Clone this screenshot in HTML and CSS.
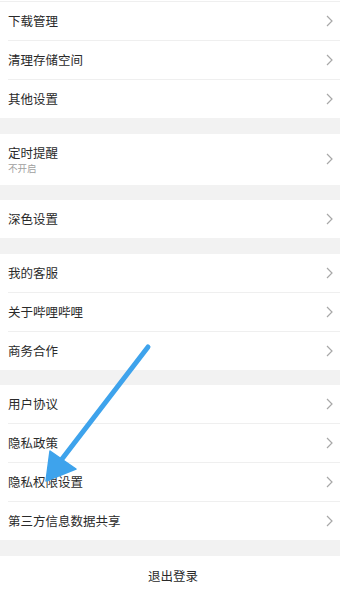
FILE: index.html
```html
<!DOCTYPE html>
<html lang="zh">
<head>
<meta charset="utf-8">
<title>设置</title>
<link rel="stylesheet" href="styles.css">
</head>
<body>
<div class="page">
  <div class="group first">
    <div class="row"><span class="label">下载管理</span><svg class="chev" viewBox="0 0 7 12"><path d="M1 1 L6 6 L1 11"/></svg></div>
    <div class="row"><span class="label">清理存储空间</span><svg class="chev" viewBox="0 0 7 12"><path d="M1 1 L6 6 L1 11"/></svg></div>
    <div class="row"><span class="label">其他设置</span><svg class="chev" viewBox="0 0 7 12"><path d="M1 1 L6 6 L1 11"/></svg></div>
  </div>
  <div class="group">
    <div class="row tall"><div class="texts"><span class="label">定时提醒</span><span class="sub">不开启</span></div><svg class="chev" viewBox="0 0 7 12"><path d="M1 1 L6 6 L1 11"/></svg></div>
  </div>
  <div class="group">
    <div class="row"><span class="label">深色设置</span><svg class="chev" viewBox="0 0 7 12"><path d="M1 1 L6 6 L1 11"/></svg></div>
  </div>
  <div class="group">
    <div class="row"><span class="label">我的客服</span><svg class="chev" viewBox="0 0 7 12"><path d="M1 1 L6 6 L1 11"/></svg></div>
    <div class="row"><span class="label">关于哔哩哔哩</span><svg class="chev" viewBox="0 0 7 12"><path d="M1 1 L6 6 L1 11"/></svg></div>
    <div class="row"><span class="label">商务合作</span><svg class="chev" viewBox="0 0 7 12"><path d="M1 1 L6 6 L1 11"/></svg></div>
  </div>
  <div class="group">
    <div class="row"><span class="label">用户协议</span><svg class="chev" viewBox="0 0 7 12"><path d="M1 1 L6 6 L1 11"/></svg></div>
    <div class="row"><span class="label">隐私政策</span><svg class="chev" viewBox="0 0 7 12"><path d="M1 1 L6 6 L1 11"/></svg></div>
    <div class="row"><span class="label">隐私权限设置</span><svg class="chev" viewBox="0 0 7 12"><path d="M1 1 L6 6 L1 11"/></svg></div>
    <div class="row"><span class="label">第三方信息数据共享</span><svg class="chev" viewBox="0 0 7 12"><path d="M1 1 L6 6 L1 11"/></svg></div>
  </div>
  <div class="group">
    <div class="logout">退出登录</div>
  </div>
  <svg class="arrow" viewBox="0 0 340 595">
    <path class="shaft" d="M148 347 L62 459"/>
    <polygon class="head" points="46,481 50,451 76,469"/>
  </svg>
</div>
</body>
</html>
```
FILE: styles.css
```css
html, body {
  margin: 0;
  padding: 0;
  background: #f2f2f2;
}
body {
  font-family: "Noto Sans CJK SC", "Noto Sans", sans-serif;
  color: #2a2a2a;
}
.page {
  position: relative;
  width: 340px;
  height: 595px;
  overflow: hidden;
  display: flex;
  flex-direction: column;
  gap: 15.5px;
}
.group {
  background: #fff;
}
.group.first {
  padding-top: 1px;
}
.group.first .row:first-child {
  border-top: 1px solid #efefef;
}
.row {
  height: 38px;
  display: flex;
  align-items: center;
  justify-content: space-between;
  padding: 0 7px 0 8px;
  position: relative;
}
.row + .row::before {
  content: "";
  position: absolute;
  left: 8px;
  right: 0;
  top: -1px;
  height: 1px;
  background: #efefef;
}
.row + .row {
  margin-top: 1px;
}
.row.tall {
  height: 51px;
}
.label {
  font-size: 12.5px;
  line-height: 16px;
  color: #2a2a2a;
}
.texts {
  display: flex;
  flex-direction: column;
  gap: 1px;
  padding-top: 1px;
}
.sub {
  font-size: 9.5px;
  line-height: 13px;
  color: #a0a0a0;
}
.chev {
  width: 7px;
  height: 12px;
  fill: none;
  stroke: #a8a8a8;
  stroke-width: 1.2;
}
.logout {
  height: 39px;
  display: flex;
  align-items: center;
  justify-content: center;
  font-size: 12.5px;
  color: #2a2a2a;
  padding-left: 6px;
}
.arrow {
  position: absolute;
  left: 0;
  top: 0;
  width: 340px;
  height: 595px;
  pointer-events: none;
}
.shaft {
  stroke: #3ea3ec;
  stroke-width: 5;
  stroke-linecap: round;
  fill: none;
}
.head {
  fill: #3ea3ec;
  stroke: #3ea3ec;
  stroke-width: 1.5;
  stroke-linejoin: round;
}
```
